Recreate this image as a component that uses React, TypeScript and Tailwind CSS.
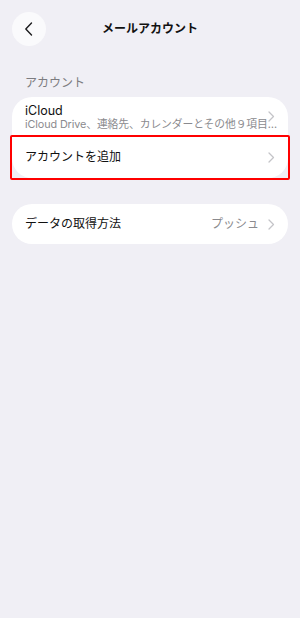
import React from "react";

const Chevron = () => (
  <svg width="7" height="11" viewBox="0 0 7 11" fill="none">
    <path d="M1 1l4.5 4.5L1 10" stroke="#c4c4c8" strokeWidth="1.3" strokeLinecap="round" strokeLinejoin="round" />
  </svg>
);

export default function App() {
  return (
    <div
      className="w-[300px] h-[618px] bg-[#f0eff5] px-3 pt-3 flex flex-col"
      style={{ fontFamily: 'Inter, "Noto Sans CJK JP", sans-serif' }}
    >
      <div className="grid grid-cols-[34px_1fr_34px] items-center h-[34px]">
        <div className="w-[34px] h-[34px] rounded-full bg-[#fafafc] flex items-center justify-center">
          <svg width="10" height="14" viewBox="0 0 10 14" fill="none" className="-ml-[1px]">
            <path d="M7.5 1L1.8 7l5.7 6" stroke="#1c1c1e" strokeWidth="1.4" strokeLinecap="round" strokeLinejoin="round" />
          </svg>
        </div>
        <div className="text-center text-[12px] font-bold text-[#111] leading-none">メールアカウント</div>
        <div />
      </div>

      <div className="mt-[30px] pl-[13px] text-[12px] leading-[14px] text-[#7c7c80]">アカウント</div>

      <div className="mt-[7px] bg-white rounded-[20px] flex flex-col">
        <div className="h-[39px] flex items-center pl-[13px] pr-[13px]">
          <div className="flex-1 min-w-0 flex flex-col">
            <div className="text-[12.5px] leading-[15px] text-[#111] mt-[1px]">iCloud</div>
            <div className="text-[10.8px] leading-[14px] text-[#8a8a8e] whitespace-nowrap tracking-[-0.1px]">
              iCloud Drive、連絡先、カレンダーとその他９項目…
            </div>
          </div>
          <div className="-mt-[1px] shrink-0 -ml-[4px]">
            <Chevron />
          </div>
        </div>
        <div className="relative h-[42px] flex items-center pl-[13px] pr-[13px]">
          <div className="flex-1 text-[12px] text-[#111]">アカウントを追加</div>
          <Chevron />
          <div className="absolute left-[-2px] right-[-2px] top-[-1px] bottom-[-2px] border-2 border-[#ff0000] rounded-[2px]" />
        </div>
      </div>

      <div className="mt-[26px] h-[40px] bg-white rounded-[20px] flex items-center pl-[13px] pr-[13px]">
        <div className="flex-1 text-[12px] text-[#111]">データの取得方法</div>
        <div className="text-[12px] text-[#8a8a8e] mr-[9px]">プッシュ</div>
        <Chevron />
      </div>
    </div>
  );
}
